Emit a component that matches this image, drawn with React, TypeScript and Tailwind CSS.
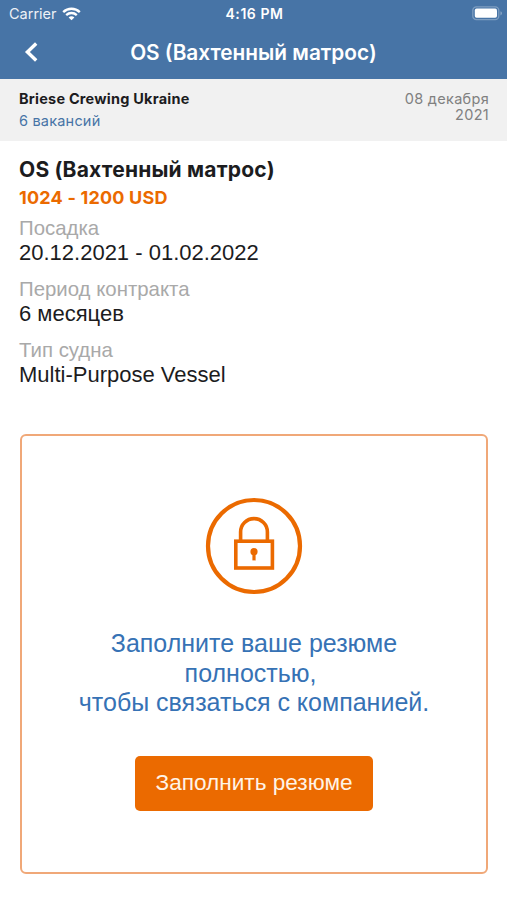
const details = [
  { label: 'Посадка', value: '20.12.2021 - 01.02.2022' },
  { label: 'Период контракта', value: '6 месяцев' },
  { label: 'Тип судна', value: 'Multi-Purpose Vessel' },
];

function Wifi() {
  return (
    <svg className="ml-[5px] h-[14px] w-[19px]" viewBox="0 0 19 14" fill="none" stroke="#fff">
      <path d="M1.2 5.1C5.9.7 13.1.7 17.8 5.1" strokeWidth="2.4" />
      <path d="M4.2 8.1c3-2.8 7.6-2.8 10.6 0" strokeWidth="2.3" />
      <path d="M6.6 10.4c1.6-1.5 4.2-1.5 5.8 0L9.5 13.3z" fill="#fff" stroke="none" />
    </svg>
  );
}

function Battery() {
  return (
    <svg className="h-[15px] w-[31px]" viewBox="0 0 31 15" fill="none">
      <rect x=".8" y=".8" width="26" height="12.8" rx="3.6" stroke="#fff" strokeOpacity=".3" strokeWidth="1.3" />
      <rect x="2.8" y="2.6" width="22.2" height="9.2" rx="1.8" fill="#fff" />
      <path d="M28.5 5.2c1.9.7 1.9 3.5 0 4.2z" fill="#fff" fillOpacity=".4" />
    </svg>
  );
}

function Lock() {
  return (
    <svg className="h-[98px] w-[98px]" viewBox="0 0 98 98" fill="none" stroke="#eb6a00">
      <circle cx="49" cy="49" r="46" strokeWidth="4.2" />
      <path d="M35.6 43V35a13.4 13.4 0 0 1 26.8 0v8" strokeWidth="3.6" />
      <rect x="30.8" y="44.2" width="36.6" height="26.8" strokeWidth="3.6" />
      <circle cx="49" cy="54.7" r="3.6" fill="#eb6a00" stroke="none" />
      <path d="M49 55v8.4" strokeWidth="3.2" />
    </svg>
  );
}

export default function App() {
  return (
    <div className="flex h-[900px] w-[507px] flex-col overflow-hidden bg-white font-['Liberation_Sans',sans-serif] text-[#1c1c1e]">
      <header className="h-[79px] bg-[#4774a6] font-['Inter',sans-serif] text-white">
        <div className="grid h-[27px] grid-cols-3 items-center pr-[4px] pl-[9px]">
          <div className="flex items-center">
            <span className="text-[14.5px] leading-[20px] whitespace-nowrap opacity-90">Carrier</span>
            <Wifi />
          </div>
          <span className="-ml-[3px] text-center text-[14px] leading-[20px] font-semibold tracking-[0.55px] whitespace-nowrap">4:16 PM</span>
          <div className="flex justify-end">
            <Battery />
          </div>
        </div>
        <div className="grid h-[50px] grid-cols-[60px_1fr_60px] items-center">
          <svg className="ml-[24px] h-[20px] w-[14px]" viewBox="0 0 14 20" fill="none" stroke="#fff" strokeWidth="3.4">
            <path d="M12.2 1.5 3.4 10l8.8 8.5" />
          </svg>
          <h1 className="pt-px text-center text-[20.8px] leading-[28px] font-semibold whitespace-nowrap">OS (Вахтенный матрос)</h1>
        </div>
      </header>

      <section className="flex h-[62px] justify-between bg-[#f1f1f1] pr-[18px] pl-[19px] font-['Inter',sans-serif]">
        <div className="pt-[9px]">
          <p className="text-[14.5px] leading-[21px] font-bold tracking-[0.22px] whitespace-nowrap">Briese Crewing Ukraine</p>
          <p className="text-[14.5px] leading-[23px] tracking-[0.2px] text-[#4774a6]">6 вакансий</p>
        </div>
        <p className="pt-[12px] text-right text-[14.5px] leading-[16px] tracking-[0.3px] text-[#808080]">
          08 декабря
          <br />
          2021
        </p>
      </section>

      <section className="px-[19px] pt-[14px]">
        <h2 className="font-['Inter',sans-serif] text-[21px] leading-[30px] font-bold tracking-[0.2px] whitespace-nowrap">OS (Вахтенный матрос)</h2>
        <p className="font-['Inter',sans-serif] text-[18px] leading-[26px] font-bold tracking-[0.2px] whitespace-nowrap text-[#eb6a00]">1024 - 1200 USD</p>
        <dl className="mt-[4px] flex flex-col gap-[10px]">
          {details.map((d) => (
            <div key={d.label} className="h-[51px]">
              <dt className="text-[20.4px] leading-[26px] text-[#a9a9a9]">{d.label}</dt>
              <dd className="text-[22px] leading-[24px]">{d.value}</dd>
            </div>
          ))}
        </dl>
      </section>

      <section className="mx-[20px] mt-[46px] flex h-[440px] w-[468px] flex-col items-center rounded-[6px] border-2 border-[#f0a878] pt-[61px]">
        <Lock />
        <p className="mt-[34px] text-center text-[25px] leading-[29.5px] whitespace-nowrap text-[#3672b5]">
          Заполните ваше резюме
          <br />
          полностью,&nbsp;
          <br />
          чтобы связаться с компанией.
        </p>
        <button className="mt-[38px] h-[55px] w-[238px] rounded-[5px] bg-[#eb6a00] text-[22.6px] leading-[28px] whitespace-nowrap text-[#fff3e6]">
          Заполнить резюме
        </button>
      </section>
    </div>
  );
}
